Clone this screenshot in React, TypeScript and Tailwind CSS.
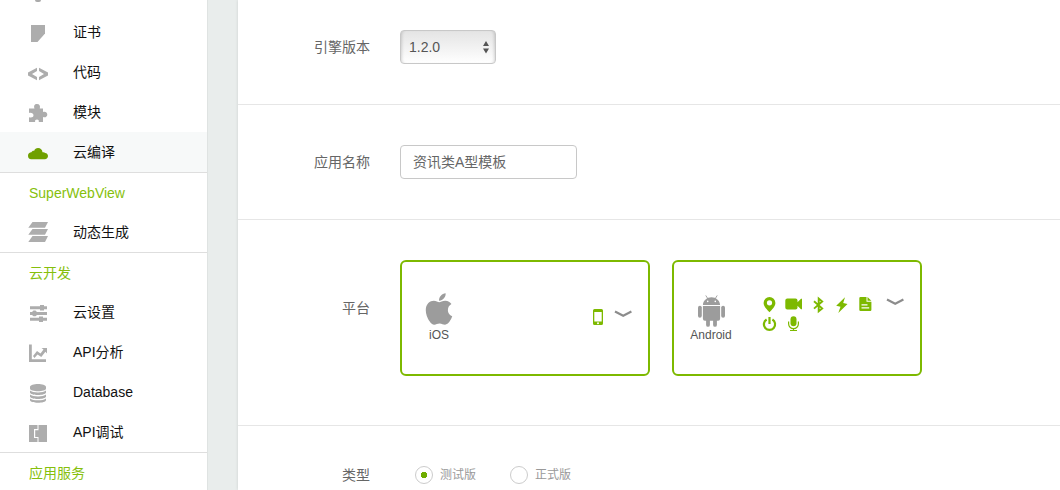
import type { ReactNode } from "react";
import { FaApple } from "react-icons/fa";

const navIcons: Record<string, ReactNode> = {
  certificate: <path d="M3 4h14v8.500L9.500 21H3z" />,
  code: (
    <path d="M9 6.800v3.300L4 13l5 2.900v3.300L0 14.400v-2.800zM11 6.800v3.300l5 2.900-5 2.900v3.300l9-4.800v-2.800z" />
  ),
  puzzle: (
    <path d="M1 7.500h5.500C5.500 5 6.500 3 9 3s3.500 2 2.800 4.500H15v3.500c2-.9 4.300.2 4.300 2.500S17 17 15 16v5h-4.200c.3-1.800-.5-2.500-1.800-2.500s-2.200.7-1.900 2.500H1v-4.800c2.500.8 4.500 0 4.500-1.900S3.500 11.400 1 12z" />
  ),
  cloud: (
    <path d="M3.200 18.200A3.500 3.500 0 0 1 0 14.700C0 12.800 1.500 11.500 3.400 11.300 3.800 10.200 4.900 9.600 6.200 9.800 6.800 8 8.200 7 10 7c2.500 0 4.400 1.900 4.500 4.300 1-.3 2.100 0 2.700.7 1.700.2 2.800 1.500 2.800 3 0 1.800-1.400 3.200-3.200 3.200z" />
  ),
  stack: <path d="M4.500 1H20l-3 5.800H.3zM4.500 8H20l-3 5.800H.3zM4.500 15H20l-3 5.900H.3z" />,
  sliders: (
    <path d="M2 5.200h10V4h4v1.200h3V8.300h-3v1.200h-4V8.300H2zM2 11h2l1.500-1.500h2L9 11h10v3H9l-1.500 1.300h-2L4 14H2zM2 16.700h9v-1.200h4v1.200h4v3h-4V21h-4v-1.300H2z" />
  ),
  chart: (
    <path d="M1 3.500h2.800V18.200H18V21H1zM5 15l4-5 3.500 2.500 3-4L13.500 7H19v5.500l-1.600-1.700-4.100 5.200L9.500 13.500 6.500 17z" />
  ),
  database: (
    <path d="M2 6c0-4 16-4 16 0v1.500c0 3.600-16 3.600-16 0zM2 9.600c2.500 2.600 13.500 2.600 16 0v2c0 3.300-16 3.300-16 0zM2 13.600c2.500 2.600 13.500 2.600 16 0v1.800c0 3.300-16 3.300-16 0zM2 17.400c2.500 2.600 13.500 2.600 16 0v1.600c0 3.700-16 3.700-16 0z" />
  ),
  debug: (
    <path d="M1 4h8.500v4H6v9h3.500v4H1zM10.500 4H19v17h-8.500v-5H7.200V9.200h3.300z" />
  ),
};

function NavIcon({ name }: { name: string }) {
  return (
    <svg viewBox="0 0 20 22" className="h-[22px] w-5 shrink-0 fill-current" aria-hidden="true">
      {navIcons[name]}
    </svg>
  );
}

type Item = { label: string; icon: string; active?: boolean };

const sections: { title?: string; items: Item[] }[] = [
  {
    items: [
      { label: "证书", icon: "certificate" },
      { label: "代码", icon: "code" },
      { label: "模块", icon: "puzzle" },
      { label: "云编译", icon: "cloud", active: true },
    ],
  },
  { title: "SuperWebView", items: [{ label: "动态生成", icon: "stack" }] },
  {
    title: "云开发",
    items: [
      { label: "云设置", icon: "sliders" },
      { label: "API分析", icon: "chart" },
      { label: "Database", icon: "database" },
      { label: "API调试", icon: "debug" },
    ],
  },
  { title: "应用服务", items: [] },
];

function Sidebar() {
  return (
    <nav className="w-52 shrink-0 border-r border-[#dfe3e2] bg-white text-sm text-[#111]">
      <div className="h-3 pl-[35px]">
        <div className="h-[2px] w-[6px] rounded-b-sm bg-[#aaa]" />
      </div>
      {sections.map((section, i) => (
        <section key={i}>
          {section.title && (
            <h2 className="flex h-10 items-center border-t border-[#dedede] pl-[29px] text-[#86bf0c]">
              {section.title}
            </h2>
          )}
          <ul>
            {section.items.map((item) => (
              <li key={item.label}>
                <a
                  href="#"
                  className={
                    item.active
                      ? "flex h-10 items-center gap-[25px] bg-[#f7f9f9] pl-7"
                      : "flex h-10 items-center gap-[25px] pl-7"
                  }
                >
                  <span className={item.active ? "text-[#6fa000]" : "text-[#adadad]"}>
                    <NavIcon name={item.icon} />
                  </span>
                  {item.label}
                </a>
              </li>
            ))}
          </ul>
        </section>
      ))}
    </nav>
  );
}

const featureIcons: Record<string, ReactNode> = {
  phone: (
    <path
      fillRule="evenodd"
      d="M5.500 1h7A1.500 1.500 0 0 1 14 2.500v13A1.500 1.500 0 0 1 12.500 17h-7A1.500 1.500 0 0 1 4 15.500v-13A1.500 1.500 0 0 1 5.500 1zM5.300 4v9.500h7.400V4zM9 14.300a1 1 0 1 0 0 2 1 1 0 0 0 0-2z"
    />
  ),
  pin: (
    <path
      fillRule="evenodd"
      d="M9.500 1a5.900 5.900 0 0 1 5.900 5.900c0 3.600-3.500 6.400-5.900 9.400-2.400-3-5.900-5.800-5.900-9.400A5.900 5.900 0 0 1 9.500 1zm0 3.200a2.600 2.600 0 1 0 0 5.200 2.600 2.600 0 0 0 0-5.200z"
    />
  ),
  video: (
    <path d="M3.300 2.400h8.200a2 2 0 0 1 2 2v1.900L17 2.700h1v10.600h-1l-3.500-3.600v1.900a2 2 0 0 1-2 2H3.300a2 2 0 0 1-2-2V4.400a2 2 0 0 1 2-2z" />
  ),
  bluetooth: (
    <path
      d="M6 5.200 14.200 12.400 10.700 15.300V2.500l3.500 2.900L6 12.600"
      fill="none"
      stroke="currentColor"
      strokeWidth="1.900"
    />
  ),
  bolt: <path d="M13 1.300 4.200 9.800l4.300.9L6.300 16.900 15.500 8l-4.300-1z" />,
  file: (
    <path
      fillRule="evenodd"
      d="M4.500 1h6v4.800h4.900v8a1.200 1.200 0 0 1-1.200 1.200H4.500a1.200 1.200 0 0 1-1.200-1.200V2.200A1.200 1.200 0 0 1 4.500 1zm7 0 3.900 3.800h-3.900zM5.500 8.200v1.200h6V8.200zm0 3v1.200h7.700v-1.200z"
    />
  ),
  power: (
    <path
      d="M6.600 4.500a5.600 5.600 0 1 0 5.800 0M9.500 2v7"
      fill="none"
      stroke="currentColor"
      strokeWidth="2.200"
    />
  ),
  mic: (
    <>
      <rect x="6.500" y="1.300" width="6" height="10" rx="3" />
      <path
        d="M4.600 6.500v2.300a4.900 4.900 0 0 0 9.800 0V6.500M9.500 13.500v2M6 15.500h7"
        fill="none"
        stroke="currentColor"
        strokeWidth="1.200"
      />
    </>
  ),
};

function Features({ names, className }: { names: string[]; className: string }) {
  return (
    <ul className={className}>
      {names.map((name) => (
        <li key={name}>
          <svg viewBox="0 0 18 18" className="size-[18px] fill-current" aria-hidden="true">
            {featureIcons[name]}
          </svg>
        </li>
      ))}
    </ul>
  );
}

function AndroidLogo() {
  return (
    <svg viewBox="0 0 27 32" className="mt-0.5 h-8 w-[27px] fill-current" aria-hidden="true">
      <path d="M8 .8 10 4M19 .8 17 4" stroke="currentColor" strokeWidth=".9" strokeLinecap="round" />
      <path
        fillRule="evenodd"
        d="M4.900 10C5.200 5.500 9 2.300 13.500 2.300s8.300 3.200 8.600 7.700zM9.700 5.600a.8.8 0 1 0 0 1.600.8.8 0 0 0 0-1.600zm7.600 0a.8.8 0 1 0 0 1.600.8.8 0 0 0 0-1.600z"
      />
      <path d="M4.900 11h17.200v12.700a2 2 0 0 1-2 2h-1.200v4.200a1.900 1.900 0 0 1-3.800 0v-4.200h-3.200v4.200a1.900 1.900 0 0 1-3.800 0v-4.200H6.900a2 2 0 0 1-2-2z" />
      <rect x="0" y="10.700" width="3.800" height="12" rx="1.900" />
      <rect x="23.200" y="10.700" width="3.800" height="12" rx="1.900" />
    </svg>
  );
}

function PlatformCard({ logo, name, children }: { logo: ReactNode; name: string; children: ReactNode }) {
  return (
    <div className="flex h-[116px] w-[250px] items-center justify-between rounded-md border-2 border-[#7db900] pr-4">
      <div className="flex w-[74px] flex-col items-center text-xs text-[#555]">
        <span className="flex h-[34px] items-center text-[#9c9c9c]">{logo}</span>
        {name}
      </div>
      {children}
    </div>
  );
}

function Expand() {
  return (
    <button type="button" aria-label="展开" className="block h-3 w-[18px] text-[#8c8c8c]">
      <svg viewBox="0 0 18 12" className="h-3 w-[18px]" aria-hidden="true">
        <path d="M1 3.500 9.200 7.700 17.400 3.500" fill="none" stroke="currentColor" strokeWidth="2.200" />
      </svg>
    </button>
  );
}

const radio =
  "size-[18px] appearance-none rounded-full border border-[#ccc] bg-white checked:bg-[radial-gradient(circle,#6fad00_3px,transparent_3.5px)]";

export default function App() {
  return (
    <div className="flex h-screen overflow-hidden bg-[#e9edec] font-['Liberation_Sans','Noto_Sans_CJK_SC',sans-serif]">
      <Sidebar />
      <main className="ml-[30px] min-w-0 flex-1 bg-white text-sm text-[#666] shadow-[0_0_3px_rgba(0,0,0,0.12)]">
        <form>
          <div className="flex items-center gap-[30px] border-b border-[#e6e6e6] pt-[30px] pb-10">
            <label htmlFor="engine" className="w-[132px] shrink-0 text-right">
              引擎版本
            </label>
            <div className="relative">
              <select
                id="engine"
                className="block h-[34px] w-24 appearance-none rounded border border-[#c8c8c8] bg-linear-to-b from-[#e4e4e4] to-white pl-2 text-sm text-[#555] shadow-[inset_3px_0_3px_-2px_rgba(0,0,0,0.15),inset_-3px_0_3px_-2px_rgba(0,0,0,0.15)]"
              >
                <option>1.2.0</option>
              </select>
              <svg
                viewBox="0 0 8 14"
                className="pointer-events-none absolute top-[10px] right-[6px] h-[14px] w-2 fill-[#555]"
                aria-hidden="true"
              >
                <path d="M4 1 7 6H1zM4 13.500 1 8.500h6z" />
              </svg>
            </div>
          </div>

          <div className="flex items-center gap-[30px] border-b border-[#e6e6e6] py-10">
            <label htmlFor="appname" className="w-[132px] shrink-0 text-right">
              应用名称
            </label>
            <input
              id="appname"
              type="text"
              defaultValue="资讯类A型模板"
              className="h-[34px] w-[177px] rounded border border-[#c8c8c8] bg-white px-3 pb-0.5 text-sm text-[#666]"
            />
          </div>

          <div className="flex gap-[30px] border-b border-[#e6e6e6] pt-10 pb-[49px]">
            <span className="w-[132px] shrink-0 pt-[38px] text-right">平台</span>
            <div className="flex flex-wrap gap-[22px]">
              <PlatformCard logo={<FaApple size={36} className="mb-0.5" />} name="iOS">
                <div className="flex items-start gap-[7px] pb-0.5 text-[#7db900]">
                  <Features names={["phone"]} className="flex" />
                  <Expand />
                </div>
              </PlatformCard>
              <PlatformCard logo={<AndroidLogo />} name="Android">
                <div className="flex items-start gap-3 pb-[7px] text-[#7db900]">
                  <Features
                    names={["pin", "video", "bluetooth", "bolt", "file", "power", "mic"]}
                    className="grid grid-cols-5 gap-x-1.5 gap-y-px"
                  />
                  <Expand />
                </div>
              </PlatformCard>
            </div>
          </div>

          <div className="flex items-center gap-[30px] pt-[39px] pb-10">
            <span className="w-[132px] shrink-0 text-right">类型</span>
            <div className="flex gap-[34px] pl-[15px] text-xs text-[#999]">
              <label className="flex items-center gap-[7px]">
                <input type="radio" name="build" defaultChecked className={radio} />
                测试版
              </label>
              <label className="flex items-center gap-[7px]">
                <input type="radio" name="build" className={radio} />
                正式版
              </label>
            </div>
          </div>
        </form>
      </main>
    </div>
  );
}
